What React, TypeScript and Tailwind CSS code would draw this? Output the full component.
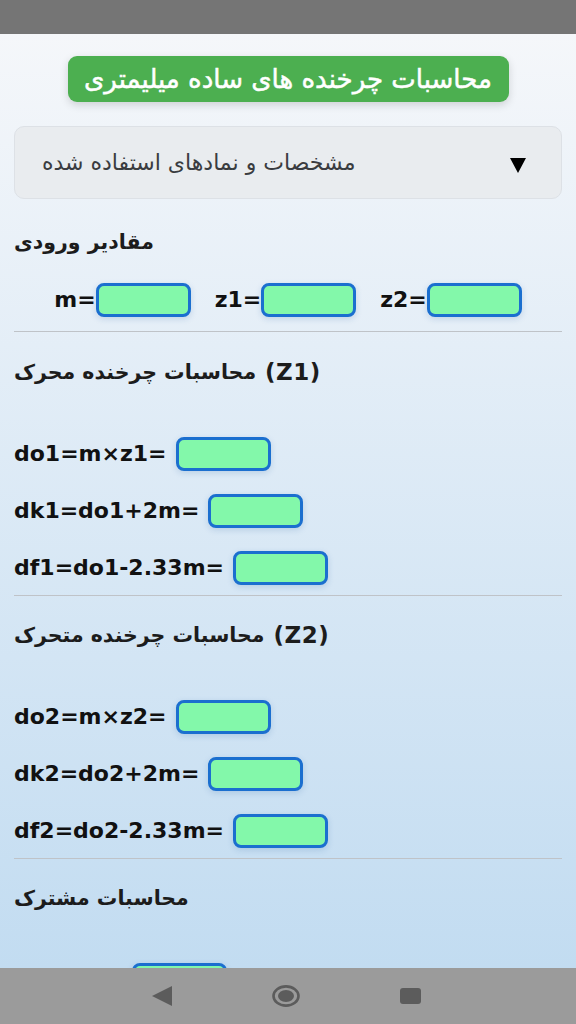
import React from "react";

const FONT = '"DejaVu Sans", "Noto Sans", sans-serif';

function Box() {
  return (
    <span className="inline-block w-[95px] h-[34px] rounded-[8px] border-[3px] border-[#1b6fcf] bg-[#83f8aa] shadow-[0_2px_6px_rgba(30,90,160,0.18)] shrink-0" />
  );
}

function Formula({ label }: { label: string }) {
  return (
    <div className="flex items-center gap-[9px] h-[34px]">
      <span className="text-[22px] font-bold text-[#111] leading-none whitespace-nowrap">{label}</span>
      <Box />
    </div>
  );
}

function Heading({ text, tag }: { text: string; tag?: string }) {
  return (
    <div className="h-[30px] flex items-center gap-[9px] font-semibold text-[#1c1c1c] leading-none whitespace-nowrap">
      <span className="text-[20.5px]">{text}</span>
      {tag && <span className="text-[23px] tracking-[0.5px]">{tag}</span>}
    </div>
  );
}

function Divider() {
  return <div className="h-px bg-[#bfc3c8]" />;
}

export default function App() {
  return (
    <div
      className="w-[576px] h-[1024px] flex flex-col overflow-hidden"
      style={{ fontFamily: FONT }}
    >
      <div className="h-[34px] bg-[#757575] shrink-0" />
      <main className="flex-1 overflow-hidden bg-gradient-to-b from-[#f5f7fa] to-[#c2dcf1] px-[14px]">
        <div className="flex justify-center mt-[22px]">
          <div className="h-[46px] w-[441px] flex items-center justify-center rounded-[9px] bg-[#4caf50] text-white text-[26px] font-normal [-webkit-text-stroke:0.5px_#ffffff] shadow-[0_3px_8px_rgba(0,0,0,0.15)] whitespace-nowrap">
            محاسبات چرخنده های ساده میلیمتری
          </div>
        </div>

        <div className="mt-[24px] h-[73px] rounded-[10px] bg-[#e9ecef] border border-[#dde1e6] flex items-center justify-between pl-[27px] pr-[35px]">
          <span className="text-[22px] text-[#3a3c40] font-normal whitespace-nowrap">
            مشخصات و نمادهای استفاده شده
          </span>
          <svg width="16" height="15" viewBox="0 0 16 15" className="mt-[5px]">
            <path d="M0 0 H16 L8 15 Z" fill="#000" />
          </svg>
        </div>

        <div className="mt-[28px]">
          <Heading text="مقادیر ورودی" />
        </div>
        <div className="mt-[26px] h-[34px] flex items-center justify-center gap-[24px]">
          <div className="flex items-center">
            <span className="text-[22px] font-bold text-[#111] leading-none">m=</span>
            <Box />
          </div>
          <div className="flex items-center">
            <span className="text-[22px] font-bold text-[#111] leading-none">z1=</span>
            <Box />
          </div>
          <div className="flex items-center">
            <span className="text-[22px] font-bold text-[#111] leading-none">z2=</span>
            <Box />
          </div>
        </div>
        <div className="mt-[14px]">
          <Divider />
        </div>

        <div className="mt-[25px]">
          <Heading text="محاسبات چرخنده محرک" tag="(Z1)" />
        </div>
        <div className="mt-[50px] flex flex-col gap-[23px]">
          <Formula label="do1=m×z1=" />
          <Formula label="dk1=do1+2m=" />
          <Formula label="df1=do1-2.33m=" />
        </div>
        <div className="mt-[10px]">
          <Divider />
        </div>

        <div className="mt-[24px]">
          <Heading text="محاسبات چرخنده متحرک" tag="(Z2)" />
        </div>
        <div className="mt-[50px] flex flex-col gap-[23px]">
          <Formula label="do2=m×z2=" />
          <Formula label="dk2=do2+2m=" />
          <Formula label="df2=do2-2.33m=" />
        </div>
        <div className="mt-[10px]">
          <Divider />
        </div>

        <div className="mt-[24px]">
          <Heading text="محاسبات مشترک" />
        </div>
        <div className="mt-[50px] flex items-center gap-[9px] h-[34px]">
          <span className="w-[109px] shrink-0" />
          <Box />
        </div>
      </main>
      <nav className="h-[56px] shrink-0 bg-[#9b9b9b] flex items-center">
        <div className="w-[152px]" />
        <svg width="20" height="20" viewBox="0 0 20 20">
          <path d="M20 0 V20 L0 10 Z" fill="#5c5c5c" />
        </svg>
        <div className="w-[100px]" />
        <svg width="28" height="22" viewBox="0 0 28 22">
          <ellipse cx="14" cy="11" rx="12.5" ry="9.6" fill="none" stroke="#5c5c5c" strokeWidth="2.6" />
          <ellipse cx="14" cy="11" rx="8" ry="6" fill="#5c5c5c" />
        </svg>
        <div className="w-[100px]" />
        <svg width="21" height="16" viewBox="0 0 21 16">
          <rect x="0" y="0" width="21" height="16" rx="3" fill="#5c5c5c" />
        </svg>
      </nav>
    </div>
  );
}
